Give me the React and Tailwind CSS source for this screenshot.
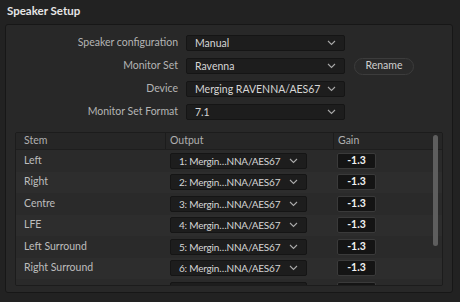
const font = { fontFamily: 'Lato, "Noto Sans", sans-serif' }

function Chevron() {
  return (
    <svg width="9" height="6" viewBox="0 0 9 6" className="shrink-0">
      <path d="M1 1 L4.5 4.5 L8 1" fill="none" stroke="#a8a8a8" strokeWidth="1.1" />
    </svg>
  )
}

function Select({ value, className = "" }) {
  return (
    <div
      className={`flex h-[16px] items-center justify-between whitespace-nowrap rounded-[2px] border border-[#151515] bg-[#1d1d1d] pl-[8px] pr-[8px] text-[10.5px] text-[#d6d6d6] ${className}`}
    >
      <span className="leading-none">{value}</span>
      <Chevron />
    </div>
  )
}

const formRows = [
  ["Speaker configuration", "Manual"],
  ["Monitor Set", "Ravenna"],
  ["Device", "Merging RAVENNA/AES67"],
  ["Monitor Set Format", "7.1"],
]

const stems = ["Left", "Right", "Centre", "LFE", "Left Surround", "Right Surround", ""]

export default function App() {
  return (
    <div className="h-[302px] w-[460px] overflow-hidden bg-[#222222]" style={font}>
      <div className="flex h-[24px] items-center px-[7px] pb-[3px] text-[11.5px] font-bold text-[#e6e6e6]">
        Speaker Setup
      </div>
      <div className="ml-[5px] flex h-[269px] w-[448px] flex-col rounded-[3px] border border-[#171717] bg-[#282828]">
        <div className="flex flex-col gap-[7px] pt-[10px]">
          {formRows.map(([label, value], i) => (
            <div key={label} className="flex h-[16px] items-center">
              <span className="w-[172px] text-right text-[10.5px] text-[#b4b4b4]">{label}</span>
              <Select value={value} className="ml-[8px] w-[159px]" />
              {i === 1 && (
                <button className="ml-[9px] flex h-[17px] w-[60px] items-center justify-center rounded-full border border-[#3c3c3c] bg-[#2a2a2a] text-[10.5px] text-[#cfcfcf]">
                  Rename
                </button>
              )}
            </div>
          ))}
        </div>

        <div className="relative mt-[12px] ml-[9px] h-[154px] w-[428px] overflow-hidden rounded-[2px] border border-[#1c1c1c] bg-[#2b2b2b]">
          <div className="flex h-[17px] border-b border-[#1e1e1e] bg-[#262626] text-[10.5px] text-[#b0b0b0]">
            <div className="flex w-[150px] items-center border-r border-[#1c1c1c] pl-[8px]">Stem</div>
            <div className="flex w-[168px] items-center border-r border-[#1c1c1c] pl-[4px]">Output</div>
            <div className="flex items-center pl-[4px]">Gain</div>
          </div>
          {stems.map((stem, i) => (
            <div
              key={i}
              className={`flex h-[21.5px] items-center text-[10.5px] ${i % 2 === 1 ? "bg-[#2d2d2d]" : "bg-[#2a2a2a]"}`}
            >
              <div className="w-[150px] pl-[8px] text-[#bdbdbd]">{stem}</div>
              <div className="w-[168px] pl-[4px]">
                <Select
                  value={stem ? `${i + 1}: Mergin…NNA/AES67` : ""}
                  className="w-[137px] !text-[10px] tracking-[-0.2px] text-[#c8c8c8]"
                />
              </div>
              <div className="pl-[3px]">
                <div className="flex h-[16px] w-[39px] items-center justify-center rounded-[2px] border border-[#3a3a3a] bg-[#141414] text-[10.5px] font-bold text-[#f2f2f2]">
                  {stem ? "-1.3" : ""}
                </div>
              </div>
            </div>
          ))}
          <div className="absolute top-[2px] right-[4px] h-[111px] w-[5px] rounded-full bg-[#5e5e5e]" />
        </div>
      </div>
    </div>
  )
}
